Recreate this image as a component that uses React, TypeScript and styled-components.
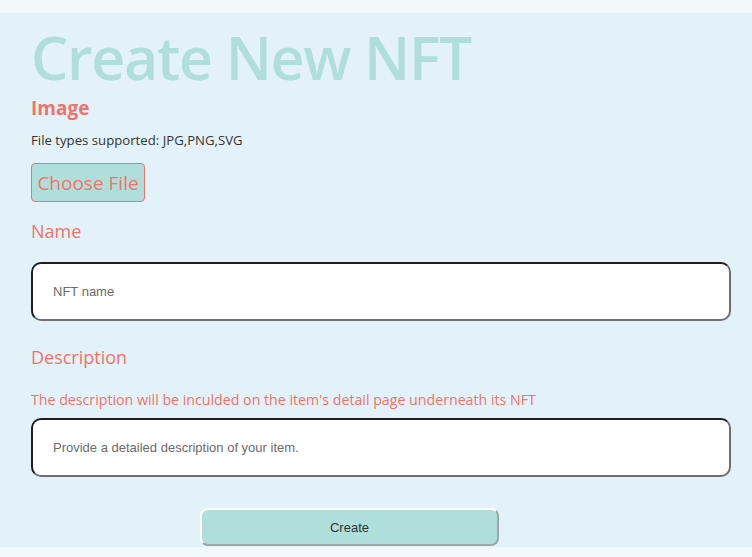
import React from "react";
import styled, { createGlobalStyle } from "styled-components";

const Global = createGlobalStyle`
  html, body { margin: 0; padding: 0; background: #eff8fb; }
  body { font-family: "Open Sans", "Noto Sans", sans-serif; }
  * { box-sizing: border-box; }
`;

const Page = styled.div`
  padding-top: 13px;
  height: 557px;
  overflow: hidden;
`;

const Panel = styled.main`
  background: #e3f2f8;
  height: 534px;
  padding: 0 21px 0 31px;
  display: flex;
  flex-direction: column;
`;

const Title = styled.h1`
  margin: 11px 0 0 0;
  font-family: "Open Sans", sans-serif;
  font-weight: 600;
  font-size: 59px;
  line-height: 66px;
  color: #b0dfdb;
  letter-spacing: -1.3px;
`;

const SectionTitle = styled.h3`
  margin: 6px 0 0 0;
  font-size: 19px;
  line-height: 24px;
  font-weight: 700;
  color: #f0736a;
`;

const Hint = styled.p<{ $accent?: boolean; $top: number }>`
  margin: ${(p) => p.$top}px 0 0 0;
  font-size: ${(p) => (p.$accent ? "14.2px" : "13.2px")};
  line-height: 20px;
  color: ${(p) => (p.$accent ? "#f0736a" : "#333333")};
`;

const FileButton = styled.button`
  align-self: flex-start;
  margin-top: 13px;
  height: 39px;
  padding: 0 5px 0 5px;
  width: 114px;
  background: #b0dfdb;
  border: 1px solid #e8766b;
  border-radius: 4px;
  color: #f0736a;
  font-family: "Open Sans", sans-serif;
  font-size: 19px;
  cursor: pointer;
`;

const FieldLabel = styled.label`
  display: block;
  font-size: 18px;
  line-height: 26px;
  color: #f0736a;
`;

const Field = styled.div<{ $top: number }>`
  margin-top: ${(p) => p.$top}px;
  display: flex;
  flex-direction: column;
`;

const TextInput = styled.input<{ $gap: number }>`
  margin-top: ${(p) => p.$gap}px;
  width: 100%;
  height: 59px;
  padding: 0 20px;
  background: #ffffff;
  border: 2px solid;
  border-color: #1e1e1e #6d7072 #6d7072 #1e1e1e;
  border-radius: 10px;
  font-family: "Liberation Sans", Arial, sans-serif;
  font-size: 13px;
  color: #333;
  outline: none;
  &::placeholder { color: #6b6b6b; }
`;

const Actions = styled.div`
  margin-top: 31px;
  padding-left: 169px;
`;

const SubmitButton = styled.button`
  width: 299px;
  height: 38px;
  background: #b0dfdb;
  border: 2px solid;
  border-color: #ffffff #a0a6a7 #a0a6a7 #ffffff;
  border-radius: 8px;
  font-family: "Liberation Sans", Arial, sans-serif;
  font-size: 13px;
  color: #333;
  cursor: pointer;
`;

export default function App() {
  return (
    <>
      <Global />
      <Page>
        <Panel>
          <Title>Create New NFT</Title>
          <SectionTitle>Image</SectionTitle>
          <Hint $top={10}>File types supported: JPG,PNG,SVG</Hint>
          <FileButton>Choose File</FileButton>
          <Field $top={16}>
            <FieldLabel>Name</FieldLabel>
            <TextInput $gap={18} placeholder="NFT name" />
          </Field>
          <Field $top={23}>
            <FieldLabel>Description</FieldLabel>
            <Hint $accent $top={20}>
              The description will be inculded on the item's detail page underneath its NFT
            </Hint>
            <TextInput $gap={8} placeholder="Provide a detailed description of your item." />
          </Field>
          <Actions>
            <SubmitButton>Create</SubmitButton>
          </Actions>
        </Panel>
      </Page>
    </>
  );
}
